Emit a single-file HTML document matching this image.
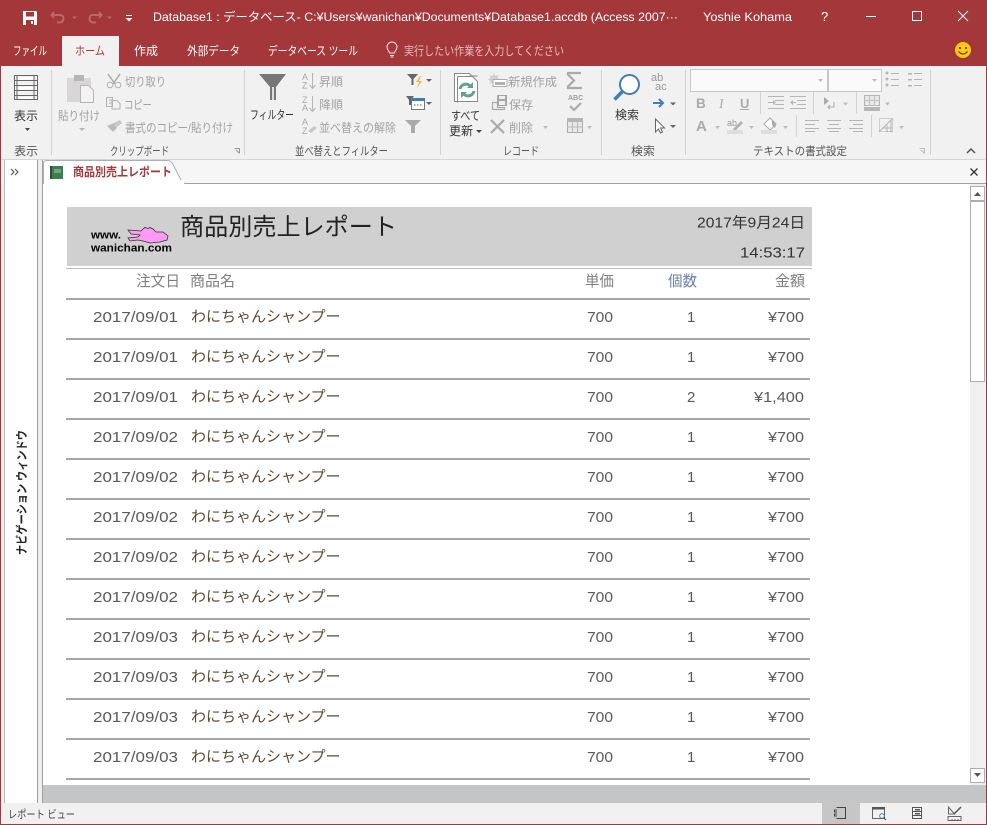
<!DOCTYPE html>
<html><head><meta charset="utf-8"><title>商品別売上レポート</title>
<style>
html,body{margin:0;padding:0;background:#fff;width:987px;height:825px;overflow:hidden}
svg{display:block}
text{font-family:"Liberation Sans","Noto Sans CJK JP",sans-serif;white-space:pre}
.w{fill:#fff;font-size:12px}
.g{fill:#A2A2A2;font-size:12px}
.d{fill:#333;font-size:12px}
.l{fill:#555;font-size:11.5px}
.r{fill:#595959;font-size:15px}
.h{fill:#808080;font-size:15px}
.i{fill:none;stroke:#B4B4B4;stroke-width:1}
.s{font-size:9px;fill:#A8A8A8}
.ln{fill:#A6A6A6}
</style></head><body>
<svg width="987" height="825" viewBox="0 0 987 825" xmlns="http://www.w3.org/2000/svg">
<rect width="987" height="825" fill="#A4373A"/>
<rect x="1" y="66" width="985" height="758" fill="#F1F1F1"/>
<rect x="62" y="36" width="57" height="30" fill="#F1F1F1"/>
<rect x="1" y="159" width="985" height="1" fill="#D6D6D6"/>
<rect x="1" y="160" width="985" height="24" fill="#F6F6F6"/>
<rect x="43" y="183" width="943" height="1" fill="#A0A0A0"/>

<!-- title bar -->
<path d="M23 11H36L37 12V25H23Z" fill="#fff"/><rect x="26" y="12" width="8" height="4.500" fill="#A4373A"/><rect x="26" y="20" width="8" height="5" fill="#A4373A"/><rect x="31" y="21" width="2" height="3" fill="#fff"/>
<path d="M54 12l-2.500 3 2.500 3M52 15h8q3.500 0 3.500 3.500t-3.500 4h-3" fill="none" stroke="#BF6668" stroke-width="2"/>
<path d="M72 16.500h5l-2.500 2.500z" fill="#BF6668"/>
<path d="M99 12l2.500 3-2.500 3M101 15h-8q-3.500 0-3.500 3.500t3.500 4h3" fill="none" stroke="#BF6668" stroke-width="2"/>
<path d="M107 16.500h5l-2.500 2.500z" fill="#BF6668"/>
<rect x="126" y="15" width="6" height="1" fill="#fff"/><path d="M125.500 18h7l-3.500 3.500z" fill="#fff"/>
<text x="153" y="21" class="w" textLength="525" lengthAdjust="spacingAndGlyphs">Database1 : データベース- C:¥Users¥wanichan¥Documents¥Database1.accdb (Access 2007···</text>
<text x="703" y="21" class="w" textLength="89" lengthAdjust="spacingAndGlyphs">Yoshie Kohama</text>
<text x="821" y="21" class="w" style="font-size:13px">?</text>
<rect x="866" y="16" width="10" height="1" fill="#fff"/>
<rect x="912.500" y="11.500" width="9" height="9" fill="none" stroke="#fff"/>
<path d="M958 11l10 10M968 11l-10 10" stroke="#fff" fill="none"/>

<!-- ribbon tabs -->
<text x="13" y="55" class="w" textLength="34" lengthAdjust="spacingAndGlyphs">ファイル</text>
<text x="75" y="55" style="font-size:12px;fill:#A4373A" textLength="30" lengthAdjust="spacingAndGlyphs">ホーム</text>
<text x="134" y="55" class="w" textLength="24" lengthAdjust="spacingAndGlyphs">作成</text>
<text x="187" y="55" class="w" textLength="53" lengthAdjust="spacingAndGlyphs">外部データ</text>
<text x="268" y="55" class="w" textLength="90" lengthAdjust="spacingAndGlyphs">データベース ツール</text>
<path d="M389.500 53c0-2-2.500-3-2.500-6a5 5 0 0 1 10 0c0 3-2.500 4-2.500 6zM390 55.500h4M390.500 57h3" fill="none" stroke="#F3E3E3"/>
<text x="404" y="55" style="font-size:12px;fill:#E2BDBE" textLength="160" lengthAdjust="spacingAndGlyphs">実行したい作業を入力してください</text>
<circle cx="963" cy="50" r="8" fill="#FFC80F"/><circle cx="960" cy="48" r="1" fill="#333"/><circle cx="966" cy="48" r="1" fill="#333"/><path d="M958.500 51.500q4.500 5 9 0" fill="none" stroke="#333"/>

<!-- separators -->
<g fill="#D2D2D2"><rect x="51" y="70" width="1" height="85"/><rect x="244" y="70" width="1" height="85"/><rect x="440" y="70" width="1" height="85"/><rect x="601" y="70" width="1" height="85"/><rect x="685" y="70" width="1" height="85"/><rect x="930" y="70" width="1" height="85"/>
<rect x="760" y="92" width="1" height="22"/><rect x="813" y="92" width="1" height="22"/><rect x="856" y="92" width="1" height="22"/><rect x="796" y="115" width="1" height="22"/><rect x="871" y="115" width="1" height="22"/></g>

<!-- 表示 -->
<g fill="none" stroke="#666"><rect x="14.500" y="75.500" width="23" height="24"/><path d="M14 80.500h24M14 85.500h24M14 90.500h24M14 95.500h24M17 75v25M34 75v25"/></g>
<g fill="#fff"><rect x="19" y="77" width="14" height="2.500"/><rect x="19" y="87" width="14" height="2.500"/><rect x="19" y="97" width="14" height="2"/></g>
<text x="14" y="120" class="d" textLength="24" lengthAdjust="spacingAndGlyphs">表示</text>
<path d="M25 128h5l-2.500 3z" fill="#444"/>
<text x="14" y="155" class="l" textLength="24" lengthAdjust="spacingAndGlyphs">表示</text>

<!-- clipboard -->
<rect x="67" y="78" width="24" height="24" fill="#D9D6D8"/><rect x="74" y="75" width="10" height="6" fill="#B9B6B8"/>
<path d="M80.500 85.500h8l5 5v12h-13z" fill="#F5F2F5" stroke="#B7B4B6"/>
<text x="58" y="120" class="g" textLength="42" lengthAdjust="spacingAndGlyphs">貼り付け</text>
<path d="M79 128h6l-3 3z" fill="#B5B5B5"/>
<path d="M108 74l7 10M120 74l-7 10" stroke="#AAA" stroke-width="1.500" fill="none"/><circle cx="110" cy="85" r="2.800" class="i"/><circle cx="118" cy="85" r="2.800" class="i"/>
<text x="125" y="86" class="g" textLength="41" lengthAdjust="spacingAndGlyphs">切り取り</text>
<path d="M106.500 97.500h6v9h-6zM112 100.500h5l3 3v5.500h-8z M109 100h3M109 103h3" class="i"/>
<text x="124" y="109" class="g" textLength="28" lengthAdjust="spacingAndGlyphs">コピー</text>
<path d="M107 126l7-3 3 5-4 4z" fill="#BBB"/><path d="M114 123l6-3 2 3-5 4z" fill="#C8C8C8"/>
<text x="125" y="132" class="g" textLength="108" lengthAdjust="spacingAndGlyphs">書式のコピー/貼り付け</text>
<text x="110" y="155" class="l" textLength="59" lengthAdjust="spacingAndGlyphs">クリップボード</text>
<path d="M234.500 148.500h5v5M236 150l3 3" fill="none" stroke="#999"/>

<!-- sort -->
<path d="M259 74h27l-10 13v13h-6V87z" fill="#777"/><rect x="272" y="87" width="2" height="13" fill="#ddd"/>
<text x="250" y="119" class="d" textLength="44" lengthAdjust="spacingAndGlyphs">フィルター</text>
<text x="302" y="80" class="s">A</text><text x="302" y="88.500" class="s">Z</text>
<path d="M312.500 73v15M309.500 85l3 3.500 3-3.500" class="i"/>
<text x="319" y="86" class="g" textLength="24" lengthAdjust="spacingAndGlyphs">昇順</text>
<text x="302" y="103" class="s">Z</text><text x="302" y="111" class="s">A</text>
<path d="M312.500 96v15M309.500 108l3 3.500 3-3.500" class="i"/>
<text x="319" y="109" class="g" textLength="24" lengthAdjust="spacingAndGlyphs">降順</text>
<text x="302" y="125" class="s">A</text><text x="302" y="134" class="s">Z</text>
<path d="M308 131l6-5 3 2-6 5z" fill="#C8C8C8"/>
<text x="319" y="132" class="g" textLength="77" lengthAdjust="spacingAndGlyphs">並べ替えの解除</text>
<text x="295" y="155" class="l" textLength="93" lengthAdjust="spacingAndGlyphs">並べ替えとフィルター</text>
<path d="M407 74h11l-4.500 5v6h-2v-6z" fill="#666"/><path d="M420 76l-4 6h3l-2 6 5-7h-3l2-5z" fill="#EDB75A"/>
<path d="M426 79h6l-3 3z" fill="#666"/>
<path d="M406 96h8l-3 4v5h-2v-5z" fill="#666"/><rect x="411.500" y="98.500" width="13" height="11" fill="#fff" stroke="#777"/><rect x="411" y="98" width="14" height="3" fill="#3E7DB8"/><path d="M414 105h1.500M417 105h1.500M420 105h1.500" stroke="#555"/>
<path d="M426 102h6l-3 3z" fill="#666"/>
<path d="M405 120h16l-6 6v7h-4v-7z" fill="#AAAAAA"/>

<!-- records -->
<path d="M454.500 73.500h15l8 8v20h-23z" fill="#fff" stroke="#888"/><path d="M457.500 76.500h14M457.500 76.500v26" stroke="#888" fill="none"/>
<path d="M469.500 76h8" stroke="#888"/>
<path d="M460 89a6 6 0 0 1 11-2M474 91a6 6 0 0 1-11 2" fill="none" stroke="#5DA48E" stroke-width="3"/><path d="M473 82v6h-6zM461 98v-6h6z" fill="#5DA48E"/>
<text x="451" y="120" class="d" textLength="29" lengthAdjust="spacingAndGlyphs">すべて</text>
<text x="449" y="135" class="d" textLength="24" lengthAdjust="spacingAndGlyphs">更新</text>
<path d="M476 130h6l-3 3z" fill="#444"/>
<path d="M494 73l1.500 3 3-1-1 3 3 1.500-3 1.500 1 3-3-1-1.500 3-1.500-3-3 1 1-3-3-1.500 3-1.500-1-3 3 1z" fill="#D0D0D0"/><rect x="493" y="79.500" width="14" height="7" fill="#fff" stroke="#ADADAD"/><rect x="495" y="82" width="10" height="3" fill="#B0B0B0"/>
<text x="508" y="86" class="g" textLength="49" lengthAdjust="spacingAndGlyphs">新規作成</text>
<path d="M492.500 102.500h5v5h7v2h-12z" fill="#F1F1F1" stroke="#AAA" stroke-width="1.200"/><rect x="497" y="95" width="10" height="11" fill="#A6A6A6"/><rect x="499" y="96" width="6" height="3" fill="#EEE"/><rect x="499" y="101" width="6" height="4" fill="#EEE"/>
<text x="509" y="109" class="g" textLength="24" lengthAdjust="spacingAndGlyphs">保存</text>
<path d="M491 120l13 13M504 120l-13 13" stroke="#AAA" stroke-width="2.200"/>
<text x="509" y="132" class="g" textLength="24" lengthAdjust="spacingAndGlyphs">削除</text>
<path d="M543 126h5l-2.500 3z" fill="#BBB"/>
<path d="M581 73h-13v1.500l6 6-6 6v1.500h14" fill="none" stroke="#AAA" stroke-width="2.200"/>
<text x="568" y="100" style="font-size:7px;font-weight:bold;fill:#A0A0A0">ABC</text>
<path d="M570 106l4 4 7-7" fill="none" stroke="#ABABAB" stroke-width="2.200"/>
<rect x="567.500" y="118.500" width="15" height="14" fill="#E8E8E8" stroke="#ADADAD"/><rect x="567" y="118" width="16" height="4" fill="#B5B5B5"/><path d="M567 127h16M572.500 122v11M577.500 122v11" stroke="#B8B8B8"/>
<path d="M587 126h5l-2.500 3z" fill="#BBB"/>
<text x="503" y="155" class="l" textLength="36" lengthAdjust="spacingAndGlyphs">レコード</text>

<!-- find -->
<circle cx="629.500" cy="84.500" r="9.500" fill="#fff" stroke="#3F7EBB" stroke-width="2"/><path d="M622.500 91.500l-8 8" stroke="#3F7EBB" stroke-width="3.500"/>
<text x="615" y="119" class="d" textLength="24" lengthAdjust="spacingAndGlyphs">検索</text>
<text x="651" y="81" style="font-size:11px;fill:#999">ab</text><text x="655" y="90" style="font-size:11px;fill:#999">ac</text>
<path d="M653 103h9M659 99l4 4-4 4" fill="none" stroke="#3F7EBB" stroke-width="2"/>
<path d="M670 102.500h6l-3 3z" fill="#666"/>
<path d="M655.500 119v13l3-3 2 4 2-1-2-4h4z" fill="#fff" stroke="#666"/>
<path d="M670 125h6l-3 3z" fill="#666"/>
<text x="631" y="155" class="l" textLength="24" lengthAdjust="spacingAndGlyphs">検索</text>

<!-- text format -->
<rect x="690.500" y="69.500" width="137" height="22" fill="#FAFAFA" stroke="#C8C8C8"/>
<rect x="828.500" y="69.500" width="53" height="22" fill="#FAFAFA" stroke="#C8C8C8"/>
<path d="M818 79h5l-2.500 3z" fill="#BBB"/><path d="M872 79h5l-2.500 3z" fill="#BBB"/>
<g fill="#B5B5B5"><circle cx="887" cy="73" r="1.500"/><circle cx="887" cy="79" r="1.500"/><circle cx="887" cy="85" r="1.500"/><rect x="891" y="73" width="8" height="1"/><rect x="891" y="79" width="8" height="1"/><rect x="891" y="85" width="8" height="1"/>
<rect x="908" y="73" width="4" height="1.500"/><rect x="908" y="79" width="4" height="1.500"/><rect x="908" y="85" width="4" height="1.500"/><rect x="914" y="73" width="8" height="1"/><rect x="914" y="79" width="8" height="1"/><rect x="914" y="85" width="8" height="1"/></g>
<text x="696" y="108" style="font-size:13.500px;font-weight:bold;fill:#AAA">B</text>
<text x="719" y="108" style="font-size:13.500px;font-style:italic;fill:#AAA;font-family:'Liberation Serif',serif">I</text>
<text x="740" y="108" style="font-size:13px;font-weight:bold;fill:#AAA">U</text><rect x="740" y="109" width="9" height="1" fill="#AAA"/>
<g fill="#B5B5B5"><rect x="768" y="96" width="16" height="1"/><rect x="775" y="100" width="9" height="1"/><rect x="775" y="104" width="9" height="1"/><rect x="768" y="108" width="16" height="1"/><path d="M768 102h5v-2l3 2.500-3 2.500v-2h-5z"/>
<rect x="790" y="96" width="16" height="1"/><rect x="797" y="100" width="9" height="1"/><rect x="797" y="104" width="9" height="1"/><rect x="790" y="108" width="16" height="1"/><path d="M796 102h-3v-2l-3 2.500 3 2.500v-2h3z"/></g>
<path d="M824 97l5 4-5 4z" fill="#AAA"/><path d="M834 102v5h-6M830 105l-2 2 2 2" fill="none" stroke="#AAA"/>
<path d="M843 102.500h5l-2.500 3z" fill="#BBB"/>
<rect x="864.500" y="95.500" width="15" height="10" fill="#E8E8E8" stroke="#B5B5B5"/><path d="M864 100.500h16M869.500 95v11M874.500 95v11" stroke="#C2C2C2"/><rect x="864" y="107" width="16" height="4" fill="#B5B5B5"/>
<path d="M885 102.500h5l-2.500 3z" fill="#BBB"/>
<text x="696" y="131" style="font-size:15px;fill:#AAA;font-weight:bold">A</text>
<path d="M715 126h5l-2.500 3z" fill="#BBB"/>
<text x="727" y="126" style="font-size:9px;fill:#999">ab</text><path d="M733 129l8-8 2 2-8 8z" fill="#B0B0B0"/><rect x="727" y="130" width="16" height="4" fill="#DEDEDE"/>
<path d="M749 126h5l-2.500 3z" fill="#BBB"/>
<path d="M764 124l6-6 6 6-6 6z" fill="#fff" stroke="#AAA"/><path d="M772 120l4 5-1 3-3-3z" fill="#AAA"/><rect x="761" y="130" width="16" height="4" fill="#DEDEDE"/>
<path d="M783 126h5l-2.500 3z" fill="#BBB"/>
<g fill="#B5B5B5"><rect x="805" y="120" width="14" height="1"/><rect x="805" y="124" width="10" height="1"/><rect x="805" y="128" width="14" height="1"/><rect x="805" y="131" width="10" height="1"/>
<rect x="827" y="120" width="14" height="1"/><rect x="829" y="124" width="10" height="1"/><rect x="827" y="128" width="14" height="1"/><rect x="829" y="131" width="10" height="1"/>
<rect x="849" y="120" width="14" height="1"/><rect x="853" y="124" width="10" height="1"/><rect x="849" y="128" width="14" height="1"/><rect x="853" y="131" width="10" height="1"/></g>
<path d="M879.500 118.500h13v13h-13z" fill="none" stroke="#AAA" stroke-dasharray="1 1"/><path d="M879 132l14-14M887 125v7M882 128h11M891 120v12" fill="none" stroke="#B5B5B5"/>
<path d="M899 126h5l-2.500 3z" fill="#BBB"/>
<text x="753" y="155" class="l" textLength="94" lengthAdjust="spacingAndGlyphs">テキストの書式設定</text>
<path d="M919.500 148.500h5v5M921 150l3 3" fill="none" stroke="#BBB"/>
<path d="M967 153l4-4 4 4" fill="none" stroke="#555" stroke-width="1.500"/>

<!-- nav pane -->
<rect x="4" y="160" width="33" height="643" fill="#fff"/>
<rect x="4" y="160" width="1" height="643" fill="#B8B8B8"/>
<rect x="37" y="160" width="1" height="643" fill="#A0A0A0"/>
<rect x="38" y="160" width="4" height="643" fill="#F0F0F0"/>
<rect x="42" y="160" width="1" height="643" fill="#A0A0A0"/>
<path d="M11 169l3 3-3 3M15 169l3 3-3 3" fill="none" stroke="#444"/>
<text transform="translate(26 555) rotate(-90)" style="font-size:12px;font-weight:bold;fill:#222" textLength="125" lengthAdjust="spacingAndGlyphs">ナビゲーション ウィンドウ</text>

<!-- document tab -->
<path d="M43.500 184V163.500q0-3 3-3H168q3 0 5 4L181 180q1.500 3.500 5 3.500" fill="#fff" stroke="#AFAFAF"/>
<rect x="44" y="180" width="140" height="5" fill="#fff"/>
<rect x="50" y="166" width="13" height="13" fill="#3E7E4E"/><rect x="50" y="166" width="2" height="13" fill="#2E4E38"/><rect x="54" y="169" width="7" height="4" fill="#6FA880"/>
<text x="73" y="176" style="font-size:12px;fill:#A4373A;font-weight:bold" textLength="99" lengthAdjust="spacingAndGlyphs">商品別売上レポート</text>
<path d="M970.500 168.500l7 7M977.500 168.500l-7 7" stroke="#333" stroke-width="1.300"/>

<!-- report area -->
<rect x="43" y="184" width="927" height="601" fill="#fff"/>
<rect x="67" y="207" width="745" height="59" fill="#D0D0D0"/>
<rect x="66" y="268" width="746" height="1" fill="#BBB"/>
<text x="91" y="238.500" style="font-size:11px;font-weight:bold;fill:#000" textLength="30" lengthAdjust="spacingAndGlyphs">www.</text>
<text x="91" y="251.500" style="font-size:11px;font-weight:bold;fill:#000" textLength="81" lengthAdjust="spacingAndGlyphs">wanichan.com</text>
<path d="M128 230L141 231L143 229L145 227.500L148 228.500L150 227.500L153 229L156 232L163 232L168 236L167 240L160 242L150 243L143 241L138 240L130 241L128 238L138 237L140 235L131 234Z" fill="#FF99F5" stroke="#333" stroke-width=".8"/>
<text x="180" y="235" style="font-size:24px;fill:#222" textLength="217" lengthAdjust="spacingAndGlyphs">商品別売上レポート</text>
<text x="697" y="227.500" style="font-size:15px;fill:#333" textLength="108" lengthAdjust="spacingAndGlyphs">2017年9月24日</text>
<text x="740" y="257.500" style="font-size:15px;fill:#333" textLength="65" lengthAdjust="spacingAndGlyphs">14:53:17</text>
<text x="136" y="286" class="h" textLength="44" lengthAdjust="spacingAndGlyphs">注文日</text>
<text x="190" y="286" class="h" textLength="45" lengthAdjust="spacingAndGlyphs">商品名</text>
<text x="585" y="286" class="h" textLength="29" lengthAdjust="spacingAndGlyphs">単価</text>
<text x="668" y="286" style="font-size:15px;fill:#6C80A8" textLength="29" lengthAdjust="spacingAndGlyphs">個数</text>
<text x="775" y="286" class="h" textLength="30" lengthAdjust="spacingAndGlyphs">金額</text>

<g class="ln">
<rect x="66" y="298" width="744" height="2"/><rect x="66" y="338" width="744" height="2"/><rect x="66" y="378" width="744" height="2"/><rect x="66" y="418" width="744" height="2"/><rect x="66" y="458" width="744" height="2"/><rect x="66" y="498" width="744" height="2"/><rect x="66" y="538" width="744" height="2"/><rect x="66" y="578" width="744" height="2"/><rect x="66" y="618" width="744" height="2"/><rect x="66" y="658" width="744" height="2"/><rect x="66" y="698" width="744" height="2"/><rect x="66" y="738" width="744" height="2"/><rect x="66" y="778" width="744" height="2"/>
</g>

<g class="r">
<text x="93" y="322" textLength="85" lengthAdjust="spacingAndGlyphs">2017/09/01</text>
<text x="93" y="362" textLength="85" lengthAdjust="spacingAndGlyphs">2017/09/01</text>
<text x="93" y="402" textLength="85" lengthAdjust="spacingAndGlyphs">2017/09/01</text>
<text x="93" y="442" textLength="85" lengthAdjust="spacingAndGlyphs">2017/09/02</text>
<text x="93" y="482" textLength="85" lengthAdjust="spacingAndGlyphs">2017/09/02</text>
<text x="93" y="522" textLength="85" lengthAdjust="spacingAndGlyphs">2017/09/02</text>
<text x="93" y="562" textLength="85" lengthAdjust="spacingAndGlyphs">2017/09/02</text>
<text x="93" y="602" textLength="85" lengthAdjust="spacingAndGlyphs">2017/09/02</text>
<text x="93" y="642" textLength="85" lengthAdjust="spacingAndGlyphs">2017/09/03</text>
<text x="93" y="682" textLength="85" lengthAdjust="spacingAndGlyphs">2017/09/03</text>
<text x="93" y="722" textLength="85" lengthAdjust="spacingAndGlyphs">2017/09/03</text>
<text x="93" y="762" textLength="85" lengthAdjust="spacingAndGlyphs">2017/09/03</text>
</g>
<g class="r" style="fill:#5E4A35">
<text x="191" y="321.500">わにちゃんシャンプー</text>
<text x="191" y="361.500">わにちゃんシャンプー</text>
<text x="191" y="401.500">わにちゃんシャンプー</text>
<text x="191" y="441.500">わにちゃんシャンプー</text>
<text x="191" y="481.500">わにちゃんシャンプー</text>
<text x="191" y="521.500">わにちゃんシャンプー</text>
<text x="191" y="561.500">わにちゃんシャンプー</text>
<text x="191" y="601.500">わにちゃんシャンプー</text>
<text x="191" y="641.500">わにちゃんシャンプー</text>
<text x="191" y="681.500">わにちゃんシャンプー</text>
<text x="191" y="721.500">わにちゃんシャンプー</text>
<text x="191" y="761.500">わにちゃんシャンプー</text>
</g>
<g class="r">
<text x="587" y="322" textLength="26" lengthAdjust="spacingAndGlyphs">700</text><text x="587" y="362" textLength="26" lengthAdjust="spacingAndGlyphs">700</text><text x="587" y="402" textLength="26" lengthAdjust="spacingAndGlyphs">700</text><text x="587" y="442" textLength="26" lengthAdjust="spacingAndGlyphs">700</text><text x="587" y="482" textLength="26" lengthAdjust="spacingAndGlyphs">700</text><text x="587" y="522" textLength="26" lengthAdjust="spacingAndGlyphs">700</text><text x="587" y="562" textLength="26" lengthAdjust="spacingAndGlyphs">700</text><text x="587" y="602" textLength="26" lengthAdjust="spacingAndGlyphs">700</text><text x="587" y="642" textLength="26" lengthAdjust="spacingAndGlyphs">700</text><text x="587" y="682" textLength="26" lengthAdjust="spacingAndGlyphs">700</text><text x="587" y="722" textLength="26" lengthAdjust="spacingAndGlyphs">700</text><text x="587" y="762" textLength="26" lengthAdjust="spacingAndGlyphs">700</text>
<text x="687" y="322">1</text><text x="687" y="362">1</text><text x="687" y="402">2</text><text x="687" y="442">1</text><text x="687" y="482">1</text><text x="687" y="522">1</text><text x="687" y="562">1</text><text x="687" y="602">1</text><text x="687" y="642">1</text><text x="687" y="682">1</text><text x="687" y="722">1</text><text x="687" y="762">1</text>
<text x="768" y="322" textLength="36" lengthAdjust="spacingAndGlyphs">¥700</text><text x="768" y="362" textLength="36" lengthAdjust="spacingAndGlyphs">¥700</text><text x="754" y="402" textLength="50" lengthAdjust="spacingAndGlyphs">¥1,400</text><text x="768" y="442" textLength="36" lengthAdjust="spacingAndGlyphs">¥700</text><text x="768" y="482" textLength="36" lengthAdjust="spacingAndGlyphs">¥700</text><text x="768" y="522" textLength="36" lengthAdjust="spacingAndGlyphs">¥700</text><text x="768" y="562" textLength="36" lengthAdjust="spacingAndGlyphs">¥700</text><text x="768" y="602" textLength="36" lengthAdjust="spacingAndGlyphs">¥700</text><text x="768" y="642" textLength="36" lengthAdjust="spacingAndGlyphs">¥700</text><text x="768" y="682" textLength="36" lengthAdjust="spacingAndGlyphs">¥700</text><text x="768" y="722" textLength="36" lengthAdjust="spacingAndGlyphs">¥700</text><text x="768" y="762" textLength="36" lengthAdjust="spacingAndGlyphs">¥700</text>
</g>

<!-- scrollbar -->
<rect x="970" y="184" width="16" height="601" fill="#F0F0F0"/>
<rect x="970.500" y="186.500" width="14" height="14" fill="#fff" stroke="#ABADB3"/>
<path d="M974 196h7l-3.500-4z" fill="#555"/>
<rect x="970.500" y="201.500" width="14" height="180" fill="#fff" stroke="#ABADB3"/>
<rect x="970.500" y="768.500" width="14" height="14" fill="#fff" stroke="#ABADB3"/>
<path d="M974 773h7l-3.500 4z" fill="#555"/>

<!-- bottom -->
<rect x="43" y="785" width="943" height="18" fill="#C4C5C7"/>
<rect x="1" y="803" width="985" height="21" fill="#F1F1F1"/>
<text x="8" y="818" style="font-size:11px;fill:#444" textLength="67" lengthAdjust="spacingAndGlyphs">レポート ビュー</text>
<rect x="822" y="803" width="38" height="21" fill="#C6C6C6"/>
<path d="M836.500 807.500h9v11h-9M837 810h-2.500v2h2.500M837 814h-2.500v2h2.500" fill="none" stroke="#444"/>
<path d="M872.500 807.500h12v11h-12z" fill="none" stroke="#666"/><rect x="872" y="807" width="13" height="2.500" fill="#555"/><circle cx="882" cy="816" r="2.300" fill="#fff" stroke="#3F7EBB"/><path d="M884 818l2 2" stroke="#444"/>
<path d="M912.500 807.500h9v11h-9zM912 811.500h10M912 815.500h10" fill="none" stroke="#555"/><rect x="915" y="809" width="5" height="1.500" fill="#555"/><rect x="915" y="813" width="5" height="1.500" fill="#555"/>
<path d="M948.500 807v7h6zM948 816.500h13v4h-13zM952 819v1.500M955 819v1.500M958 819v1.500" fill="none" stroke="#666"/><path d="M954 814l7-7" stroke="#555" stroke-width="1.500"/>
</svg>
</body></html>
